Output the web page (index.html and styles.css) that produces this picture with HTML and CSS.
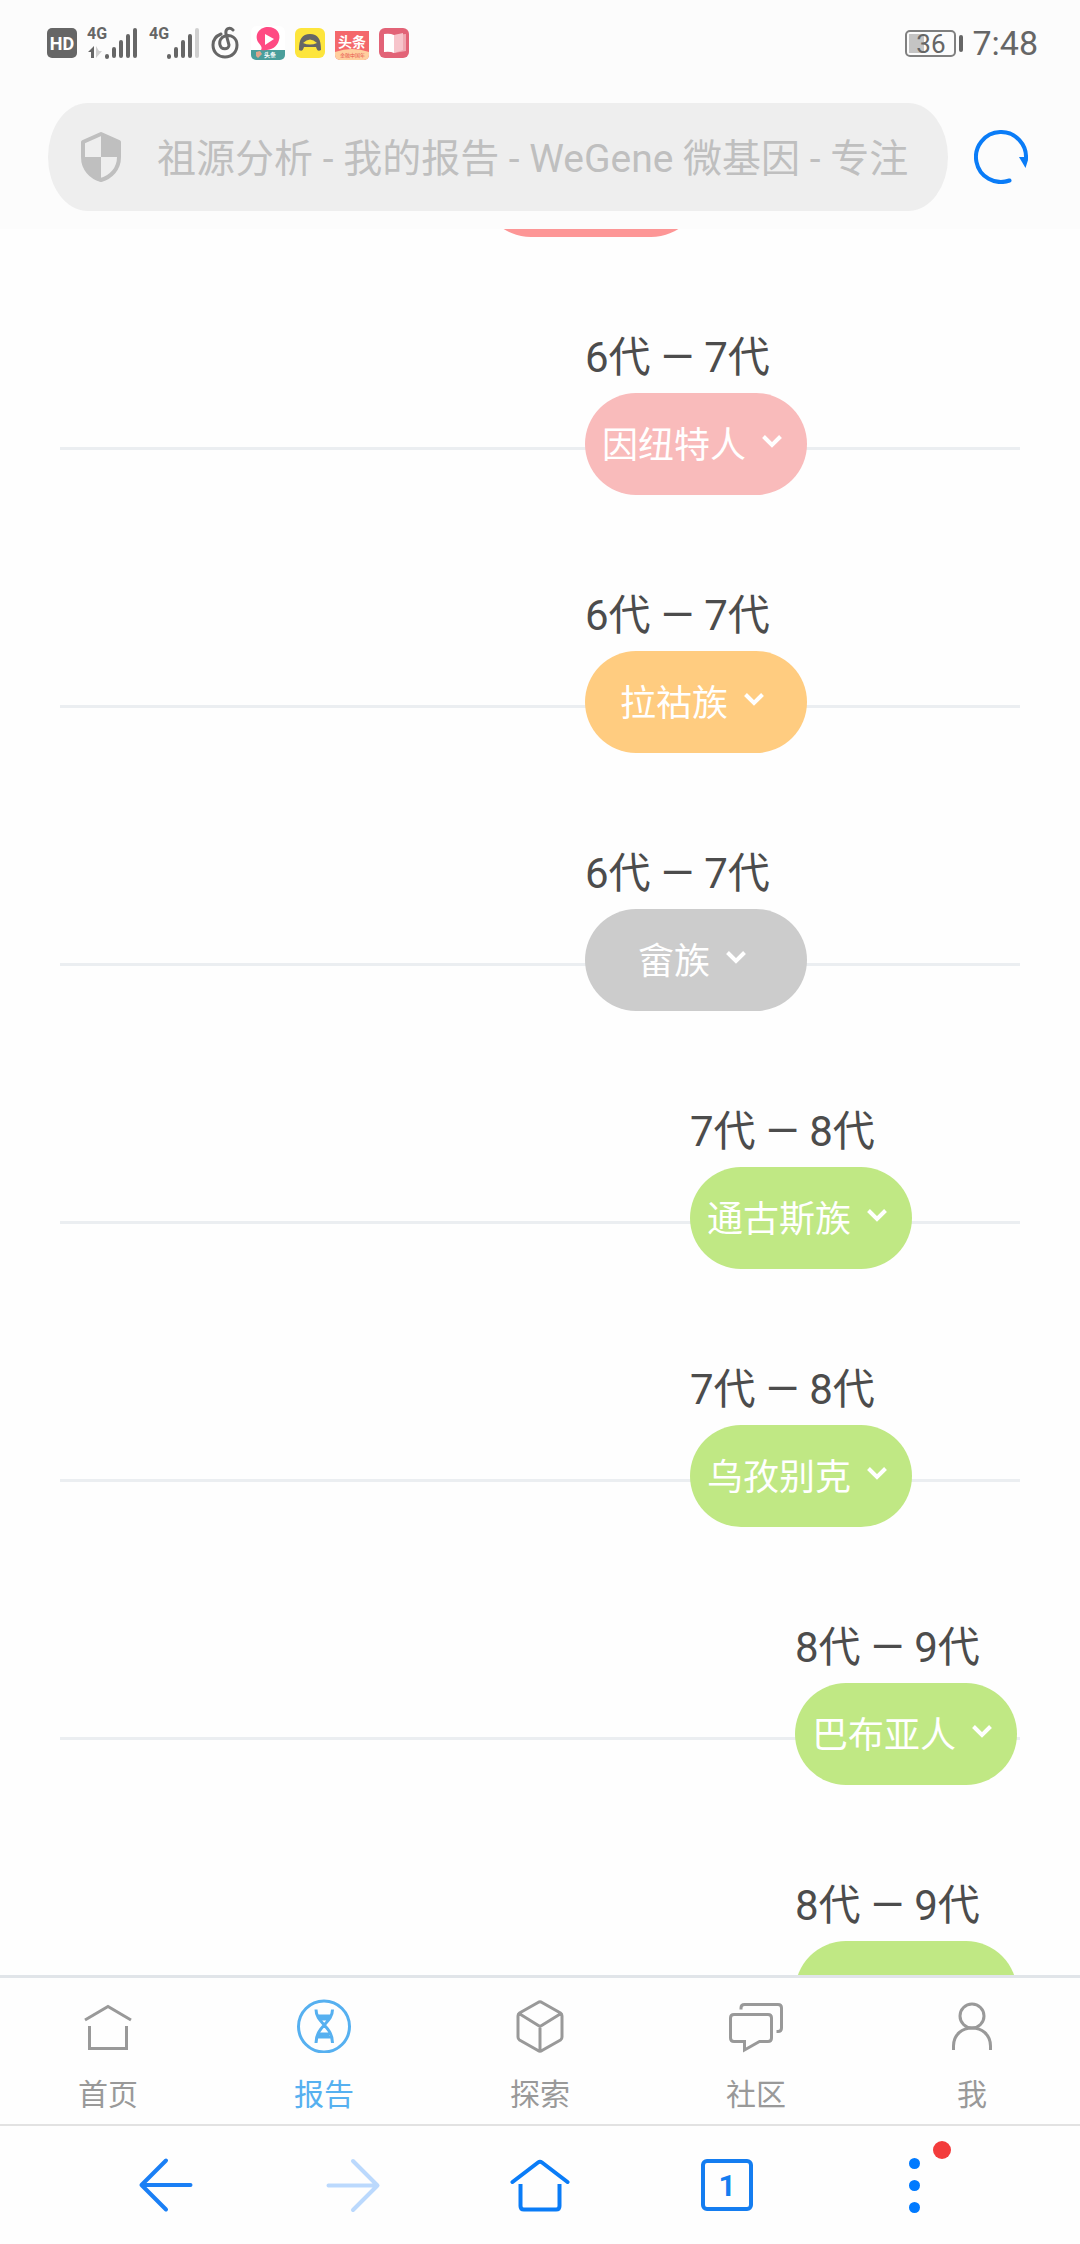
FILE: index.html
```html
<!DOCTYPE html>
<html lang="zh-CN">
<head>
  <meta charset="UTF-8" />
  <meta name="viewport" content="width=device-width, initial-scale=1.0" />
  <title>祖源分析 - 我的报告 - WeGene 微基因</title>
  <link rel="stylesheet" href="styles.css">
</head>
<body>
  <header class="top">
    <div class="status">
      <div class="status-icons">
        <span class="hd">HD</span>
        <svg class="signal" width="52" height="46" viewBox="0 -6 52 46">
          <text x="0" y="13">4G</text>
          <path class="bar" d="M20 31v-1M27 30v-7M34 30V16M41 30V10M48 30V4"/>
          <path class="up" d="M7 32V20L1 26h3v6z"/>
          <path class="down" d="M9 20v12l6-7h-3z"/>
        </svg>
        <svg class="signal" width="52" height="46" viewBox="0 -6 52 46">
          <text x="0" y="13">4G</text>
          <path class="bar" d="M20 31v-1M27 30v-7M34 30V16M41 30V10"/>
          <path class="bar off" d="M48 30V4"/>
        </svg>
        <svg width="30" height="34" viewBox="0 0 30 34">
          <path d="M10 8C5 10 2 14 2 19c0 8 6 12 12 12 7 0 12-5 12-12 0-7-6-11-12-9-4 1-6 5-5 9 1 5 9 5 9 0L15 8c-1-6 4-7 7-4" fill="none" stroke="#666" stroke-width="3" stroke-linecap="round"/>
        </svg>
        <svg width="34" height="34" viewBox="0 0 34 34">
          <rect width="34" height="34" rx="6" fill="#fff"/>
          <path d="M0 24h34v5a5 5 0 0 1-5 5H5a5 5 0 0 1-5-5z" fill="#4a9e9b"/>
          <path d="M7 16C3 8 9 1 17 1c9 0 13 7 11 13-2 8-9 11-18 10 2-3-1-5-3-8z" fill="#ff4a83"/>
          <path d="M14 8l9 5-9 6z" fill="#fff"/>
          <path d="M5 26l4-1 2 3-4 4-2-2z" fill="#e0a58b"/>
          <text x="13" y="31" font-size="6" font-weight="700" fill="#fff">头条</text>
        </svg>
        <svg width="30" height="30" viewBox="0 0 30 30">
          <rect width="30" height="30" rx="6" fill="#fde53c"/>
          <path d="M4 22C4 11 7 6 15 6s11 5 11 16c-3 2-4 0-5-3H9c-1 3-2 5-5 3z" fill="#666"/>
          <path d="M8 15q7-7 14 0-7 3-14 0z" fill="#fde53c"/>
        </svg>
        <svg width="34" height="34" viewBox="0 0 34 34">
          <path d="M0 5h34v24a5 5 0 0 1-5 5H5a5 5 0 0 1-5-5z" fill="#f4686b"/>
          <path d="M0 26q17-6 34 0v3a5 5 0 0 1-5 5H5a5 5 0 0 1-5-5z" fill="#ffcf9e"/>
          <text x="3" y="21" font-size="14" font-weight="700" fill="#fff">头条</text>
          <text x="5" y="31" font-size="5" fill="#e8554f">金融中国年</text>
        </svg>
        <svg width="30" height="30" viewBox="0 0 30 30">
          <rect width="30" height="30" rx="6" fill="#e26377"/>
          <path d="M15 7l9-2v17l-9 3z" fill="#f7c4cb"/>
          <path d="M15 7l12-1v17l-12 2z" fill="#f7c4cb" opacity=".7"/>
          <path d="M5 6q6-1 10 1v18q-4-2-10-1z" fill="#fff"/>
        </svg>
      </div>
      <div class="status-right">
        <span class="battery">36</span>
        <span class="clock">7:48</span>
      </div>
    </div>
    <div class="address">
      <label class="url">
        <svg width="42" height="52" viewBox="0 0 42 52">
          <path d="M21 3L39 11v15c0 12-8 20-18 23C11 46 3 38 3 26V11z" fill="none" stroke="#bfbfbf" stroke-width="4" stroke-linejoin="round"/>
          <path d="M21 3L39 11v15H21zM3 26h18v23C11 46 3 38 3 26z" fill="#bfbfbf"/>
        </svg>
        <input type="text" aria-label="网址" value="祖源分析 - 我的报告 - WeGene 微基因 - 专注">
      </label>
      <button class="reload" aria-label="刷新">
        <svg width="54" height="54" viewBox="0 0 54 54">
          <path d="M35.500 50.500A25 25 0 1 1 51.800 30" fill="none" stroke="#0a7cf7" stroke-width="4" stroke-linecap="round"/>
          <path d="M45 27h9q0 5-2.500 11z" fill="#0a7cf7"/>
        </svg>
      </button>
    </div>
  </header>

  <main class="report">
    <ul class="timeline" id="timeline"></ul>
  </main>

  <nav class="tabs">
    <a href="#">
      <svg viewBox="0 0 54 54"><path d="M4 21L27 7.500 50 21M8.500 27v22.500h37V27"/></svg>
      <span>首页</span>
    </a>
    <a href="#" class="active">
      <svg viewBox="0 0 54 54"><circle cx="27" cy="27.500" r="25.500"/><path d="M19 10.500c0 14 16.500 16 16.500 33.500M35.500 10.500C35.500 24.500 19 26.500 19 44M20 17h14M22 20h10M22 35h10M20 38h14"/></svg>
      <span>报告</span>
    </a>
    <a href="#">
      <svg viewBox="0 0 54 54"><path d="M25 3.500q2-1.500 4 0L47.500 14q1.500 1 1.500 3v21q0 2-1.500 3L29 51.500q-2 1.500-4 0L6.500 41Q5 40 5 38V17q0-2 1.500-3zM6 14.500l21 13 21-13M27 27.500V52"/></svg>
      <span>探索</span>
    </a>
    <a href="#">
      <svg viewBox="0 0 54 54"><path d="M5 15.500h34q3.500 0 3.500 3.500v20q0 3.500-3.500 3.500h-8.500L15.500 51v-8.500H5q-3.500 0-3.500-3.500V19q0-3.500 3.500-3.500zM12 10.500V9q0-3.500 3.500-3.500H49q3.500 0 3.500 3.500v20q0 3.500-3.500 3.500h-1.500"/></svg>
      <span>社区</span>
    </a>
    <a href="#">
      <svg viewBox="0 0 54 54"><circle cx="27" cy="17" r="12"/><path d="M8.500 51v-4c0-24 37-24 37 0v4"/></svg>
      <span>我</span>
    </a>
  </nav>

  <nav class="browser">
    <button aria-label="后退">
      <svg viewBox="0 0 60 60"><path stroke="#1a7ff5" d="M30 5.500L5.500 30 30 54.500M5.500 30h49"/></svg>
    </button>
    <button aria-label="前进" disabled>
      <svg viewBox="0 0 60 60"><path stroke="#bbd9fd" d="M30 6l24.500 24.500L30 55M54.500 30.500h-49"/></svg>
    </button>
    <button aria-label="主页">
      <svg viewBox="0 0 60 60"><path d="M2.500 27L28 7.500q2-1.500 4 0L57.500 27"/><path stroke-linecap="butt" d="M10.500 29v22q0 3.500 3.500 3.500h32q3.500 0 3.500-3.500V29"/></svg>
    </button>
    <button aria-label="标签页"><span class="count">1</span></button>
    <button aria-label="菜单">
      <span class="menu"><i></i><i></i><i></i></span>
    </button>
  </nav>

  <script>
    const populations = [
      { step: 4, from: 5, to: 6, name: "", color: "#fd9696" },
      { step: 5, from: 6, to: 7, name: "因纽特人", color: "#f9bbbb" },
      { step: 5, from: 6, to: 7, name: "拉祜族", color: "#ffcc80" },
      { step: 5, from: 6, to: 7, name: "畲族", color: "#cccccc" },
      { step: 6, from: 7, to: 8, name: "通古斯族", color: "#c0e884" },
      { step: 6, from: 7, to: 8, name: "乌孜别克", color: "#c0e884" },
      { step: 7, from: 8, to: 9, name: "巴布亚人", color: "#c0e884" },
      { step: 7, from: 8, to: 9, name: "", color: "#c0e884" }
    ];

    const timeline = document.getElementById("timeline");
    populations.forEach((p) => {
      const row = document.createElement("li");
      row.className = "row";
      row.style.setProperty("--step", p.step);
      row.innerHTML = `
        <p>${p.from}代 — ${p.to}代</p>
        <div class="track">
          <button style="background-color: ${p.color}" aria-label="${p.name || "展开"}">
            <span>${p.name}</span>
            <svg width="36" height="36" viewBox="0 0 36 36"><path d="M9.500 10.500l8.500 8.500 8.500-8.500"/></svg>
          </button>
        </div>`;
      timeline.appendChild(row);
    });
  </script>
</body>
</html>
```
FILE: styles.css
```css
* { box-sizing: border-box; }
body {
  margin: 0;
  height: 100vh;
  display: flex;
  flex-direction: column;
  overflow: hidden;
  background-color: #fefefe;
  color: #4c4c4c;
  font-family: Roboto, "Noto Sans CJK SC", sans-serif;
}
button {
  padding: 0;
  border: none;
  background: none;
  font-family: inherit;
  cursor: pointer;
}
svg { display: block; flex: none; }

/* status bar + address bar */
.top { background-color: #fcfcfc; }
.status {
  height: 86px;
  padding: 0 42px 0 47px;
  display: flex;
  align-items: center;
  justify-content: space-between;
  color: #666;
}
.status-icons {
  display: flex;
  align-items: center;
  gap: 10px;
}
.hd {
  width: 30px;
  height: 30px;
  border-radius: 5px;
  background-color: #666;
  color: #fff;
  font-size: 18px;
  font-weight: 700;
  line-height: 31px;
  text-align: center;
}
.signal text {
  font-size: 16px;
  font-weight: 700;
  fill: #666;
}
.signal .bar {
  fill: none;
  stroke: #666;
  stroke-width: 4;
  stroke-linecap: round;
}
.signal .off { stroke: #d0d0d0; }
.signal .up { fill: #666; }
.signal .down { fill: #d0d0d0; }
.status-right {
  display: flex;
  align-items: center;
  gap: 16px;
}
.battery {
  position: relative;
  width: 51px;
  height: 27px;
  border: 2px solid #808080;
  border-radius: 5px;
  background: linear-gradient(#c4c4c4, #c4c4c4) 2px 2px / 15px 19px no-repeat;
  font-size: 26px;
  line-height: 24px;
  text-align: center;
}
.battery::after {
  content: "";
  position: absolute;
  top: 3px;
  right: -9px;
  width: 4px;
  height: 17px;
  border-radius: 2px;
  background-color: #666;
}
.clock { font-size: 34px; }

.address {
  display: flex;
  align-items: center;
  gap: 26px;
  padding: 17px 52px 18px 48px;
}
.url {
  flex: 1;
  min-width: 0;
  height: 108px;
  padding: 0 34px 0 32px;
  display: flex;
  align-items: center;
  gap: 35px;
  border-radius: 40px / 54px;
  background-color: #eee;
}
.url input {
  flex: 1;
  min-width: 0;
  padding: 0 0 4px;
  border: none;
  outline: none;
  background: none;
  color: #bfbfbf;
  font-family: inherit;
  font-size: 39px;
}

/* timeline */
.report {
  flex: 1;
  min-height: 0;
  overflow: hidden;
}
.timeline {
  list-style: none;
  margin: -154px 0 0;
  padding: 0 60px;
}
.row { height: 258px; }
.row p {
  margin: 0 0 0 calc((100% - 225px) * var(--step) / 7);
  padding-bottom: 10px;
  font-size: 42px;
  line-height: 50px;
  white-space: nowrap;
}
.track {
  height: 102px;
  background: linear-gradient(#ebeef1, #ebeef1) 0 54px / 100% 3px no-repeat;
}
.track button {
  width: 222px;
  height: 102px;
  margin-left: calc((100% - 225px) * var(--step) / 7);
  display: flex;
  align-items: center;
  justify-content: center;
  gap: 8px;
  border-radius: 51px;
  color: #fff;
  font-size: 36px;
  white-space: nowrap;
}
.track span { padding-bottom: 4px; }
.track path {
  fill: none;
  stroke: #fff;
  stroke-width: 4;
}

/* site tabs */
.tabs {
  display: flex;
  border-top: 3px solid #e1e5e9;
  padding: 21px 0 11px;
}
.tabs a {
  flex: 1;
  display: flex;
  flex-direction: column;
  align-items: center;
  gap: 24px;
  color: #999;
  font-size: 30px;
  line-height: 36px;
  text-decoration: none;
}
.tabs svg {
  width: 54px;
  height: 54px;
  fill: none;
  stroke: currentColor;
  stroke-width: 3;
}
.tabs .active { color: #56b0f0; }

/* browser buttons */
.browser {
  height: 120px;
  padding: 0 72px;
  display: flex;
  border-top: 2px solid #e2e2e2;
}
.browser button {
  flex: 1;
  display: flex;
  align-items: center;
  justify-content: center;
}
.browser svg {
  width: 60px;
  height: 60px;
  fill: none;
  stroke: #0a7cf7;
  stroke-width: 4;
  stroke-linecap: round;
  stroke-linejoin: round;
}
.count {
  width: 52px;
  height: 52px;
  border: 4px solid #147df0;
  border-radius: 6px;
  color: #147df0;
  font-size: 30px;
  font-weight: 700;
  line-height: 45px;
}
.menu {
  position: relative;
  display: flex;
  flex-direction: column;
  gap: 11px;
}
.menu i {
  width: 11px;
  height: 11px;
  border-radius: 50%;
  background-color: #007aff;
}
.menu::after {
  content: "";
  position: absolute;
  top: -17px;
  left: 24px;
  width: 18px;
  height: 18px;
  border-radius: 50%;
  background-color: #f33b3b;
}
```
